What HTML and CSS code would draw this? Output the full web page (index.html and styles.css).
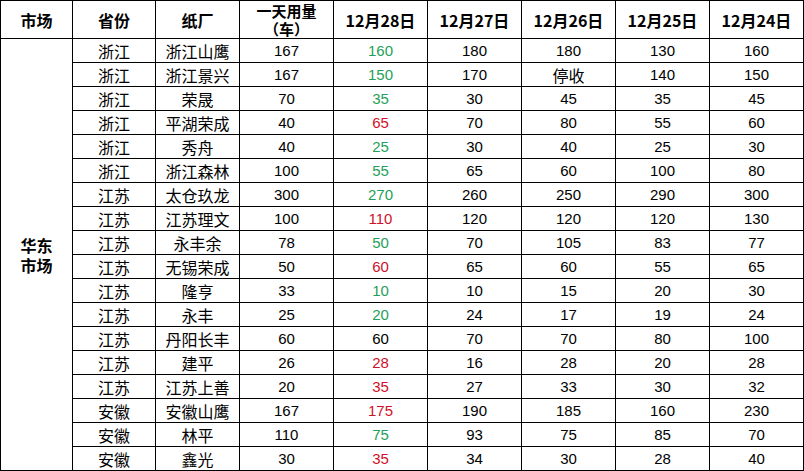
FILE: index.html
```html
<!DOCTYPE html>
<html lang="zh-CN">
<head>
<meta charset="utf-8">
<link rel="stylesheet" href="styles.css">
</head>
<body>
<table class="sheet">
<colgroup>
<col class="c-market"><col class="c-prov"><col class="c-mill"><col class="c-use">
<col class="c-day"><col class="c-day"><col class="c-day"><col class="c-day"><col class="c-day">
</colgroup>
<thead>
<tr class="head">
<th>市场</th><th>省份</th><th>纸厂</th><th class="two"><span class="ln">一天用量</span><span class="ln">（车）</span></th>
<th>12月28日</th><th>12月27日</th><th>12月26日</th><th>12月25日</th><th>12月24日</th>
</tr>
</thead>
<tbody>
<tr><td class="market" rowspan="18"><span class="ln">华东</span><span class="ln">市场</span></td><td>浙江</td><td>浙江山鹰</td><td class="n">167</td><td class="n up">160</td><td class="n">180</td><td class="n">180</td><td class="n">130</td><td class="n">160</td></tr>
<tr><td>浙江</td><td>浙江景兴</td><td class="n">167</td><td class="n up">150</td><td class="n">170</td><td>停收</td><td class="n">140</td><td class="n">150</td></tr>
<tr><td>浙江</td><td>荣晟</td><td class="n">70</td><td class="n up">35</td><td class="n">30</td><td class="n">45</td><td class="n">35</td><td class="n">45</td></tr>
<tr><td>浙江</td><td>平湖荣成</td><td class="n">40</td><td class="n down">65</td><td class="n">70</td><td class="n">80</td><td class="n">55</td><td class="n">60</td></tr>
<tr><td>浙江</td><td>秀舟</td><td class="n">40</td><td class="n up">25</td><td class="n">30</td><td class="n">40</td><td class="n">25</td><td class="n">30</td></tr>
<tr><td>浙江</td><td>浙江森林</td><td class="n">100</td><td class="n up">55</td><td class="n">65</td><td class="n">60</td><td class="n">100</td><td class="n">80</td></tr>
<tr><td>江苏</td><td>太仓玖龙</td><td class="n">300</td><td class="n up">270</td><td class="n">260</td><td class="n">250</td><td class="n">290</td><td class="n">300</td></tr>
<tr><td>江苏</td><td>江苏理文</td><td class="n">100</td><td class="n down">110</td><td class="n">120</td><td class="n">120</td><td class="n">120</td><td class="n">130</td></tr>
<tr><td>江苏</td><td>永丰余</td><td class="n">78</td><td class="n up">50</td><td class="n">70</td><td class="n">105</td><td class="n">83</td><td class="n">77</td></tr>
<tr><td>江苏</td><td>无锡荣成</td><td class="n">50</td><td class="n down">60</td><td class="n">65</td><td class="n">60</td><td class="n">55</td><td class="n">65</td></tr>
<tr><td>江苏</td><td>隆亨</td><td class="n">33</td><td class="n up">10</td><td class="n">10</td><td class="n">15</td><td class="n">20</td><td class="n">30</td></tr>
<tr><td>江苏</td><td>永丰</td><td class="n">25</td><td class="n up">20</td><td class="n">24</td><td class="n">17</td><td class="n">19</td><td class="n">24</td></tr>
<tr><td>江苏</td><td>丹阳长丰</td><td class="n">60</td><td class="n">60</td><td class="n">70</td><td class="n">70</td><td class="n">80</td><td class="n">100</td></tr>
<tr><td>江苏</td><td>建平</td><td class="n">26</td><td class="n down">28</td><td class="n">16</td><td class="n">28</td><td class="n">20</td><td class="n">28</td></tr>
<tr><td>江苏</td><td>江苏上善</td><td class="n">20</td><td class="n down">35</td><td class="n">27</td><td class="n">33</td><td class="n">30</td><td class="n">32</td></tr>
<tr><td>安徽</td><td>安徽山鹰</td><td class="n">167</td><td class="n down">175</td><td class="n">190</td><td class="n">185</td><td class="n">160</td><td class="n">230</td></tr>
<tr><td>安徽</td><td>林平</td><td class="n">110</td><td class="n up">75</td><td class="n">93</td><td class="n">75</td><td class="n">85</td><td class="n">70</td></tr>
<tr><td>安徽</td><td>鑫光</td><td class="n">30</td><td class="n down">35</td><td class="n">34</td><td class="n">30</td><td class="n">28</td><td class="n">40</td></tr>
</tbody>
</table>
</body>
</html>
```

FILE: styles.css
```css
html, body {
  margin: 0;
  padding: 0;
  background: #ffffff;
}

.sheet {
  border-collapse: collapse;
  table-layout: fixed;
  width: 804px;
  font-family: "Noto Sans CJK SC", "Liberation Sans", sans-serif;
  font-size: 16px;
  color: #000000;
}

.c-market { width: 72px; }
.c-prov { width: 83px; }
.c-mill { width: 84px; }
.c-use { width: 94px; }
.c-day { width: 94px; }

.sheet th,
.sheet td {
  border: 1px solid #000000;
  padding: 0;
  text-align: center;
  vertical-align: middle;
  white-space: nowrap;
}

.head {
  height: 38px;
}

.head th {
  font-weight: bold;
  font-size: 16px;
  line-height: 18px;
}

.ln {
  display: block;
}

.head th.two {
  font-size: 15px;
  line-height: 18px;
  padding-top: 1px;
}

.sheet tbody tr {
  height: 24px;
}

.sheet td {
  line-height: 22px;
}

.sheet td.n {
  font-family: "Liberation Sans", "Noto Sans CJK SC", sans-serif;
  font-size: 15px;
}

.sheet td.market {
  font-weight: bold;
  line-height: 20px;
}

.up { color: #1fa05a; }
.down { color: #d0112b; }
```
